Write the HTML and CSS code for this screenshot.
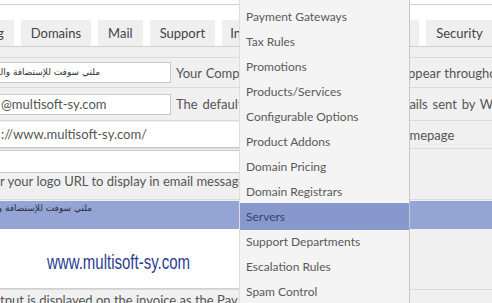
FILE: index.html
```html
<html>
    <head>
        <title>General Settings</title>
        <link rel="stylesheet" href="styles.css">
    </head>
    <body>
        <div class="topbar"></div>
        <div class="tabs">
            <span class="tab">Ordering</span>
            <span class="tab">Domains</span>
            <span class="tab">Mail</span>
            <span class="tab">Support</span>
            <span class="tab tight">Invoices</span>
            <span class="tab tight">Credit</span>
            <span class="tab">Affiliates</span>
            <span class="tab">Security</span>
            <span class="tab">Social</span>
        </div>

        <div class="form">
            <div class="row row-gap"></div>
            <div class="row row-a">
                <div class="field short rtl">ملتي سوفت للإستضافة والتصميم</div>
                <span class="hint">Your Company Name as you want it to appear throughout the system</span>
            </div>
            <div class="row row-b">
                <div class="field short"><span class="val">@multisoft-sy.com</span></div>
                <span class="hint">The default sender address used for emails sent by WHMCS</span>
            </div>
            <div class="row row-c">
                <div class="field long"><span class="val">://www.multisoft-sy.com/</span></div>
                <span class="hint">The URL to your website homepage</span>
            </div>
            <div class="row row-d">
                <div class="field wide"></div>
                <span class="hint below">r your logo URL to display in email messages or leave blank for none</span>
            </div>
            <div class="row row-e">
                <div class="band rtl">ملتي سوفت للإستضافة والتصميم</div>
                <div class="paper"><span class="site">www.multisoft-sy.com</span></div>
            </div>
            <div class="row row-f">
                <span class="hint below">tput is displayed on the invoice as the Pay To details</span>
            </div>
        </div>

        <ul class="menu">
            <li>Payment Gateways</li>
            <li>Tax Rules</li>
            <li>Promotions</li>
            <li>Products/Services</li>
            <li>Configurable Options</li>
            <li>Product Addons</li>
            <li>Domain Pricing</li>
            <li>Domain Registrars</li>
            <li class="active">Servers</li>
            <li>Support Departments</li>
            <li>Escalation Rules</li>
            <li>Spam Control</li>
        </ul>
    </body>
</html>
```

FILE: styles.css
```css
body {
    margin: 0;
    height: 303px;
    overflow: hidden;
    position: relative;
    background: #fff;
    font-family: Lato, "Open Sans", sans-serif;
    font-size: 13px;
    color: #555;
}
/* top strip */
.topbar {
    height: 4px;
    border-bottom: 1px solid #cfcfcf;
}
.tabs {
    display: flex;
    gap: 7px;
    margin-top: 15px;
    margin-left: -57px;
    white-space: nowrap;
    border-bottom: 1px solid #cfcfcf;
}
.tab {
    flex: none;
    height: 26px;
    line-height: 26px;
    padding: 0 10px;
    background: #efefef;
    color: #444;
}
.tab.tight {
    padding: 0 8px;
}
/* settings rows */
.form {
    background: #f0f0f0;
}
.row {
    display: flex;
    align-items: center;
    white-space: nowrap;
    border-bottom: 1px solid #dadada;
}
.row-gap {
    height: 10px;
}
.row-a {
    height: 29px;
}
.row-a .hint {
    word-spacing: 0.6px;
}
.row-b {
    height: 32px;
}
.row-b .hint {
    word-spacing: 1.5px;
}
.row-c {
    height: 27px;
}
.row-d {
    height: 50px;
    flex-direction: column;
    align-items: flex-start;
    justify-content: flex-start;
}
.row-e {
    flex-direction: column;
    align-items: stretch;
}
.row-f {
    height: 20px;
    border-bottom: none;
}
.field {
    flex: none;
    box-sizing: border-box;
    background: #fff;
    border: 1px solid #c9c9c9;
    border-left: none;
    height: 21px;
    line-height: 19px;
    overflow: hidden;
}
.field.short {
    width: 171px;
}
.field.long {
    width: 246px;
    height: 26px;
    line-height: 24px;
    border-top: none;
}
.field.wide {
    width: 380px;
    height: 23px;
    margin-top: 1px;
}
.val {
    padding-left: 1px;
}
/* arabic text: starts on the right, runs off the left edge */
.rtl {
    direction: rtl;
    text-align: right;
    overflow: hidden;
    font-family: "DejaVu Sans", sans-serif;
    font-size: 9px;
    color: #333;
}
.field.rtl {
    padding-right: 70px;
}
.hint {
    margin-left: 5px;
}
.hint.below {
    margin-left: 0;
    line-height: 17px;
}
.band {
    height: 28px;
    background: #93a4d5;
    margin-top: 1px;
    padding-right: calc(100% - 92px);
    line-height: 14px;
    color: #2d2d3a;
}
.paper {
    width: 380px;
    height: 60px;
    background: #fff;
    border-bottom: 1px solid #d0d0d0;
    padding-left: 47px;
    box-sizing: border-box;
    line-height: 66px;
}
.site {
    display: inline-block;
    font-family: "Liberation Sans", Arial, sans-serif;
    font-size: 20px;
    color: #2b3d91;
    transform: scaleX(0.75);
    transform-origin: left center;
}
/* dropdown menu */
.menu {
    position: absolute;
    top: 0;
    left: 239px;
    width: 169px;
    height: 303px;
    margin: 0;
    padding: 4px 0 0;
    list-style: none;
    background: #f4f4f4;
    border-left: 1px solid #dedede;
    border-right: 1px solid #c6c6c6;
    font-size: 12px;
}
.menu li {
    height: 25px;
    line-height: 25px;
    padding-left: 6px;
    color: #5a5a5a;
}
.menu li.active {
    height: 27px;
    line-height: 27px;
    margin: -1px 0;
    background: #8798cc;
    color: #36436f;
}
```
